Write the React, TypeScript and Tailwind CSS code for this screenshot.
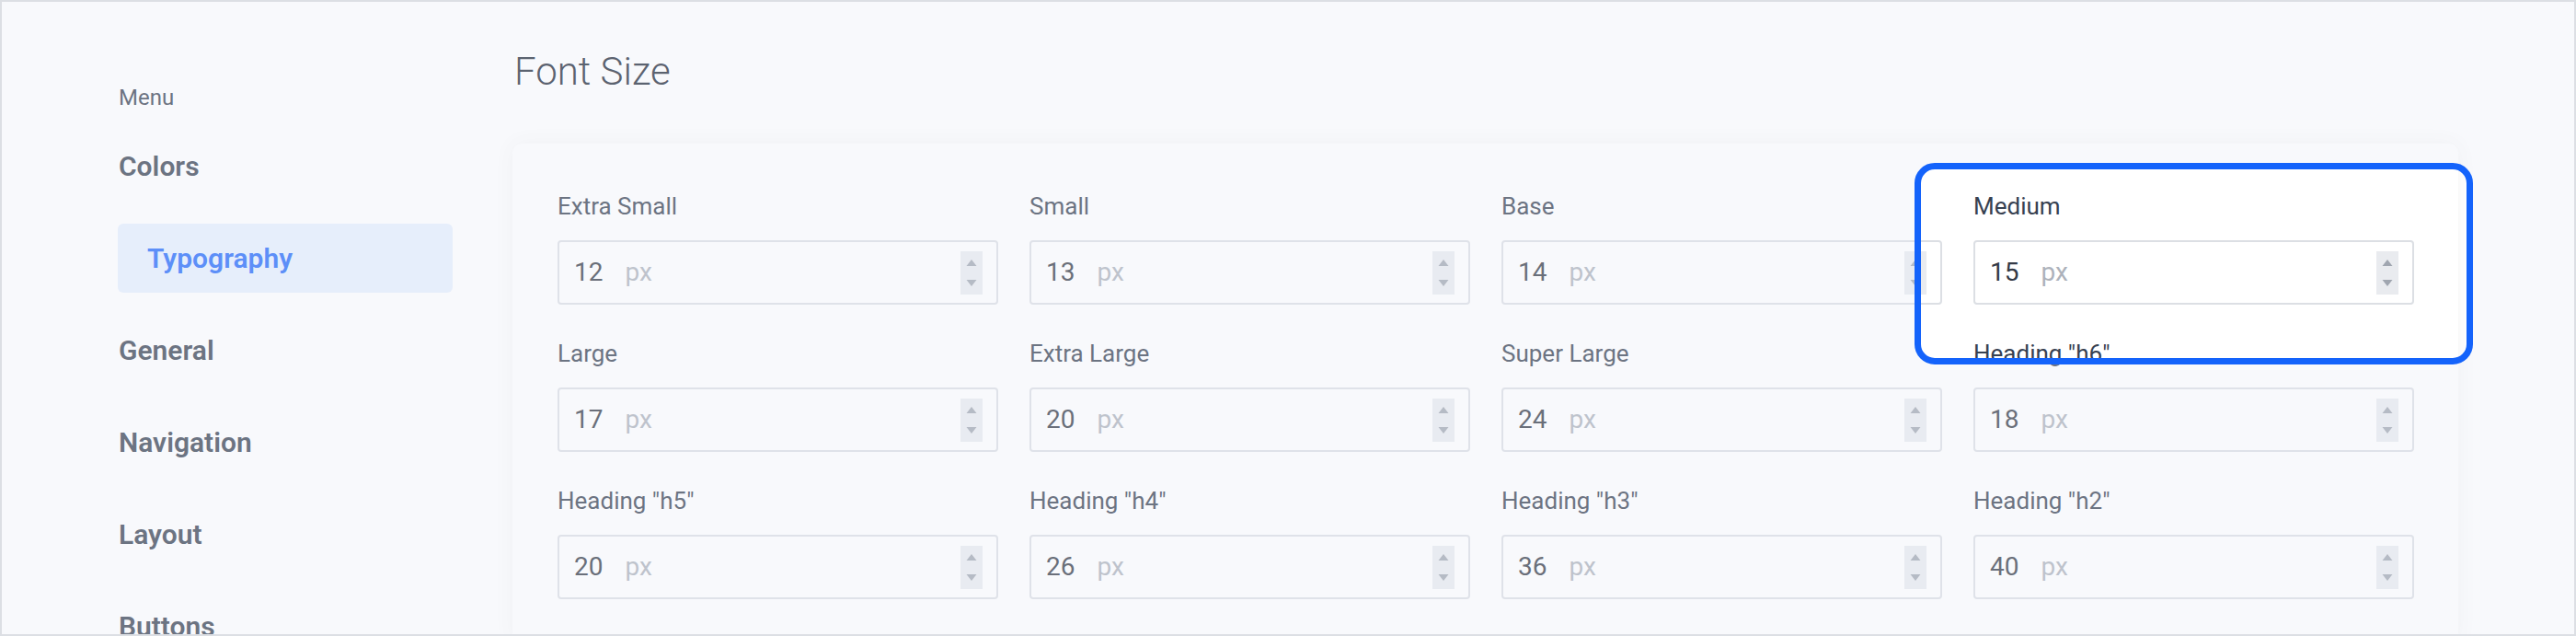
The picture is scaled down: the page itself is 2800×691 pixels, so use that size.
const menuItems = ["Colors", "Typography", "General", "Navigation", "Layout", "Buttons"];

const fields = [
  { label: "Extra Small", value: 12 },
  { label: "Small", value: 13 },
  { label: "Base", value: 14 },
  { label: "Medium", value: 15 },
  { label: "Large", value: 17 },
  { label: "Extra Large", value: 20 },
  { label: "Super Large", value: 24 },
  { label: 'Heading "h6"', value: 18 },
  { label: 'Heading "h5"', value: 20 },
  { label: 'Heading "h4"', value: 26 },
  { label: 'Heading "h3"', value: 36 },
  { label: 'Heading "h2"', value: 40 },
];

const Spinner = () => (
  <svg width="24" height="47" viewBox="0 0 24 47" className="shrink-0 bg-[#e9ebef]">
    <polygon points="6.5,16 17.5,16 12,9" fill="#a0a6b0" />
    <polygon points="6.5,31 17.5,31 12,38" fill="#a0a6b0" />
  </svg>
);

const SizeField = ({ label, value }: { label: string; value: number }) => (
  <div>
    <div className="text-[26px] leading-[30px] text-[#374151] whitespace-nowrap">{label}</div>
    <div className="mt-[22px] h-[70px] rounded-[4px] border-2 border-[#dcdfe4] bg-white flex items-center pl-4 pr-[15px]">
      <span className="text-[28px] leading-none text-[#343a46]">{value}</span>
      <span className="ml-6 text-[28px] leading-none text-[#adb2bb]">px</span>
      <div className="ml-auto">
        <Spinner />
      </div>
    </div>
  </div>
);

const App = () => {
  return (
    <div className="h-screen overflow-hidden border-2 border-[#dcdfe4] bg-white flex pl-[126px] pr-[126px] font-['Roboto',sans-serif]">
      <aside className="w-[364px] shrink-0 pt-[90px]">
        <div className="pl-px text-[24px] leading-[28px] text-[#374151]">Menu</div>
        <nav className="mt-[23px] flex flex-col gap-[25px]">
          {menuItems.map((item) =>
            item === "Typography" ? (
              <div
                key={item}
                className="h-[75px] shrink-0 flex items-center rounded-[6px] bg-[#e6f0fe] pl-8 text-[30px] leading-[30px] font-semibold text-[#2168fa]"
              >
                {item}
              </div>
            ) : (
              <div
                key={item}
                className="h-[75px] shrink-0 flex items-center pl-px text-[30px] leading-[30px] font-semibold text-[#374151]"
              >
                {item}
              </div>
            )
          )}
        </nav>
      </aside>

      <main className="ml-[65px] flex-1 pt-[52px]">
        <h1 className="pl-[2px] text-[42px] leading-[48px] font-light text-[#1f2937]">Font Size</h1>

        <div className="relative mt-[54px] rounded-[10px] bg-white pt-[53px] pl-[49px] pr-[48px] pb-12 shadow-[0_0_22px_rgba(0,0,0,0.05)]">
          <div className="grid grid-cols-4 gap-x-[34px] gap-y-[38px]">
            {fields.map((f) => (
              <SizeField key={f.label} label={f.label} value={f.value} />
            ))}
          </div>

          {/* spotlight around the Medium field */}
          <div className="absolute left-[1524px] top-[21px] z-50 w-[607px] h-[219px] rounded-[22px] border-[7px] border-[#1463fb] shadow-[0_0_0_9999px_rgba(231,235,245,0.3)]" />
        </div>
      </main>
    </div>
  );
};

export default App;
